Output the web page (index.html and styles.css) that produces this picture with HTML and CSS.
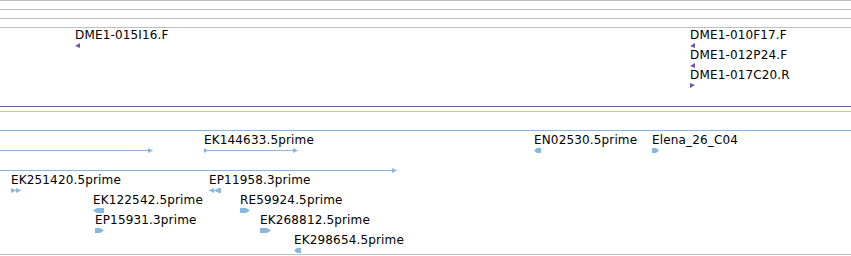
FILE: index.html
```html
<!DOCTYPE html>
<html>
<head>
<meta charset="utf-8">
<link rel="stylesheet" href="styles.css">
</head>
<body>
<div class="browser">
  <div class="ruler">
    <div class="ruler-row"></div>
    <div class="ruler-row"></div>
    <div class="ruler-row"></div>
  </div>

  <div class="track track-purple">
    <div class="feat" style="left:75px;top:0px">
      <span class="label">DME1-015I16.F</span>
      <svg class="glyph" width="5" height="5"><polygon points="0,3 5,0 5,5"/></svg>
    </div>
    <div class="feat" style="left:690px;top:0px">
      <span class="label">DME1-010F17.F</span>
      <svg class="glyph" width="5" height="5"><polygon points="0,3 5,0 5,5"/></svg>
    </div>
    <div class="feat" style="left:690px;top:20px">
      <span class="label">DME1-012P24.F</span>
      <svg class="glyph" width="5" height="5"><polygon points="0,3 5,0 5,5"/></svg>
    </div>
    <div class="feat" style="left:690px;top:40px">
      <span class="label">DME1-017C20.R</span>
      <svg class="glyph" width="5" height="5"><polygon points="0,0 5,2 0,5"/></svg>
    </div>
    <div class="feat" style="left:0px;top:76px">
      <svg class="glyph" width="851" height="5"><line x1="0" y1="2.5" x2="851" y2="2.5"/></svg>
    </div>
  </div>

  <div class="track track-blue">
    <div class="feat" style="left:0px;top:16px">
      <svg class="glyph" width="851" height="5"><line x1="0" y1="2.5" x2="851" y2="2.5"/></svg>
    </div>
    <div class="feat" style="left:0px;top:36px">
      <svg class="glyph" width="153" height="5"><line x1="0" y1="2.5" x2="148" y2="2.5"/><polygon points="148,0 153,2.5 148,5"/></svg>
    </div>
    <div class="feat" style="left:204px;top:21px">
      <span class="label">EK144633.5prime</span>
      <svg class="glyph" width="95" height="5"><polygon points="0,0 4,2.5 0,5"/><line x1="0" y1="2.5" x2="90" y2="2.5"/><polygon points="89,0 94,2.5 89,5"/></svg>
    </div>
    <div class="feat" style="left:534px;top:21px">
      <span class="label">EN02530.5prime</span>
      <svg class="glyph" width="7" height="5"><polygon points="0,2.5 3,0 7,0 7,5 3,5"/></svg>
    </div>
    <div class="feat" style="left:652px;top:21px">
      <span class="label">Elena_26_C04</span>
      <svg class="glyph" width="7" height="5"><polygon points="0,0 4,0 7,2.5 4,5 0,5"/></svg>
    </div>
    <div class="feat" style="left:0px;top:56px">
      <svg class="glyph" width="398" height="5"><line x1="0" y1="2.5" x2="392" y2="2.5"/><polygon points="392,0 397,2.5 392,5"/></svg>
    </div>
    <div class="feat" style="left:11px;top:61px">
      <span class="label">EK251420.5prime</span>
      <svg class="glyph" width="10" height="5"><polygon points="0,0 5,2.5 0,5"/><polygon points="5,0 10,2.5 5,5"/><line x1="0" y1="2.5" x2="10" y2="2.5"/></svg>
    </div>
    <div class="feat" style="left:209px;top:61px">
      <span class="label">EP11958.3prime</span>
      <svg class="glyph" width="12" height="5"><polygon points="0,2.5 5,0 5,5"/><polygon points="5,2.5 10,0 10,5"/><rect x="10" y="0" width="2" height="5"/><line x1="0" y1="2.5" x2="12" y2="2.5"/></svg>
    </div>
    <div class="feat" style="left:93px;top:81px">
      <span class="label">EK122542.5prime</span>
      <svg class="glyph" width="11" height="5"><polygon points="0,2.5 4,0 11,0 11,5 4,5"/></svg>
    </div>
    <div class="feat" style="left:240px;top:81px">
      <span class="label">RE59924.5prime</span>
      <svg class="glyph" width="10" height="5"><polygon points="0,0 6,0 10,2.5 6,5 0,5"/></svg>
    </div>
    <div class="feat" style="left:95px;top:101px">
      <span class="label">EP15931.3prime</span>
      <svg class="glyph" width="9" height="5"><polygon points="0,0 5,0 9,2.5 5,5 0,5"/></svg>
    </div>
    <div class="feat" style="left:260px;top:101px">
      <span class="label">EK268812.5prime</span>
      <svg class="glyph" width="11" height="5"><polygon points="0,0 7,0 11,2.5 7,5 0,5"/></svg>
    </div>
    <div class="feat" style="left:294px;top:121px">
      <span class="label">EK298654.5prime</span>
      <svg class="glyph" width="7" height="5"><polygon points="0,2.5 3,0 7,0 7,5 3,5"/></svg>
    </div>
  </div>
</div>
</body>
</html>
```
FILE: styles.css
```css
html, body {
  margin: 0;
  padding: 0;
  background: #ffffff;
}

.browser {
  width: 851px;
  height: 256px;
  overflow: hidden;
  font-family: "DejaVu Sans", "Liberation Sans", sans-serif;
  font-size: 12px;
  color: #000000;
}

.ruler {
  display: flex;
  flex-direction: column;
}

.ruler-row {
  height: 8px;
  border-top: 1px solid #c0c0c0;
}

.track {
  position: relative;
  border-top: 1px solid #c0c0c0;
}

.track-purple {
  height: 83px;
}

.track-blue {
  height: 142px;
  border-bottom: 1px solid #c0c0c0;
}

.feat {
  position: absolute;
  display: flex;
  flex-direction: column;
  align-items: flex-start;
}

.label {
  display: block;
  line-height: 14px;
  height: 14px;
  letter-spacing: 0.15px;
  white-space: nowrap;
}

.label + .glyph {
  margin-top: 1px;
}

.glyph {
  display: block;
}

.glyph line {
  shape-rendering: crispEdges;
}

.track-purple .glyph {
  fill: #7254a8;
}

.track-purple .glyph line {
  stroke: #7254a8;
  stroke-width: 1;
}

.track-blue .glyph {
  fill: #84b8e0;
}

.track-blue .glyph line {
  stroke: #84b8e0;
  stroke-width: 1;
}
```
